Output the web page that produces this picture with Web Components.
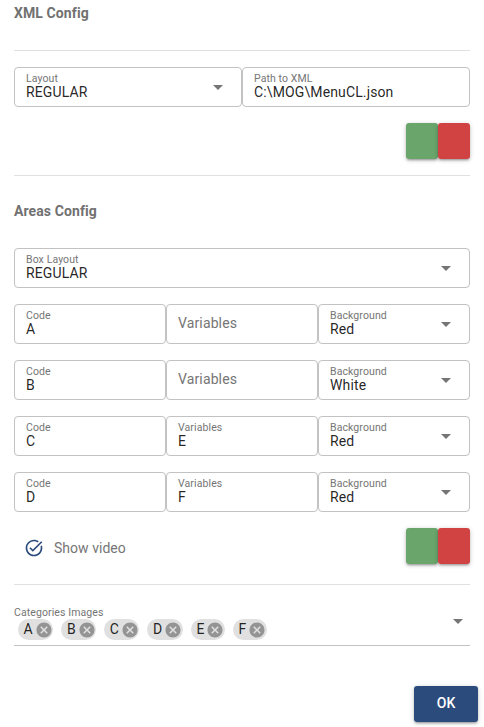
<!DOCTYPE html>
<html lang="en">
<head>
<meta charset="utf-8">
<title>Config</title>
<style>
html,body{margin:0;background:#fff}
body{font-family:Roboto,"Liberation Sans",sans-serif;font-size:14px;color:rgba(0,0,0,.87);overflow:hidden}
</style>
</head>
<body>
<config-page></config-page>
<script>
function define(name, html) {
  customElements.define(name, class extends HTMLElement {
    constructor() {
      super();
      const t = document.createElement('template');
      t.innerHTML = html;
      this.attachShadow({mode: 'open'}).append(t.content.cloneNode(true));
    }
  });
}

define('drop-arrow', `<style>:host{display:block;width:24px;height:24px;color:#757575}svg{display:block}</style>
<svg width="24" height="24" viewBox="0 0 24 24" fill="currentColor"><path d="M7 10l5 5 5-5z"/></svg>`);

define('section-title', `<style>:host{display:block;height:22px;line-height:22px;font-size:14px;font-weight:700;letter-spacing:.1px;color:#717171}</style><slot></slot>`);

define('rule-line', `<style>:host{display:block;height:1px;background:#e0e0e0}</style>`);

define('field-row', `<style>:host{display:flex;height:40px;margin-bottom:16px}::slotted(*){flex:1 1 0;min-width:0}</style><slot></slot>`);

customElements.define('outlined-field', class extends HTMLElement {
  connectedCallback() {
    const root = this.attachShadow({mode: 'open'});
    root.innerHTML = `<style>
:host{display:flex;align-items:center;box-sizing:border-box;height:40px;padding:0 11px;border:1px solid #c2c2c2;border-radius:4px}
.text{flex:1;min-width:0;letter-spacing:.13px;white-space:nowrap}
.label{font-size:10.5px;line-height:12px;letter-spacing:.1px;color:#757575}
.value{line-height:16px;margin-top:-1px;padding-bottom:1px}
.empty{line-height:20px;color:#757575;margin-top:-2px}
</style><div class="text"></div>`;
    const box = root.querySelector('.text');
    const add = (cls, s) => {
      const d = document.createElement('div');
      d.className = cls;
      d.textContent = s;
      box.append(d);
    };
    const value = this.getAttribute('value');
    if (value) {
      add('label', this.getAttribute('label'));
      add('value', value);
    } else add('empty', this.getAttribute('label'));
    if (this.hasAttribute('select')) root.append(document.createElement('drop-arrow'));
  }
});

define('action-button', `<style>:host{display:flex;align-items:center;justify-content:center;box-sizing:border-box;width:32px;height:36px;border-radius:3px;background:var(--fill);color:#fff;font-weight:500;box-shadow:0 1px 5px rgba(0,0,0,.2),0 2px 2px rgba(0,0,0,.14),0 3px 1px -2px rgba(0,0,0,.12)}
:host([wide]){width:64px;padding-bottom:2px}</style><slot></slot>`);

define('button-pair', `<style>:host{display:flex;height:36px}.g{--fill:#6aa56c}.r{--fill:#d14242}</style>
<action-button class="g"></action-button><action-button class="r"></action-button>`);

define('check-option', `<style>:host{display:flex;align-items:center;gap:10px;padding:4px 0 0 10px;color:#757575;letter-spacing:.03px}svg{display:block;color:#2c4b7d}</style>
<svg width="20" height="20" viewBox="0 0 24 24" fill="currentColor"><path d="M22 5.18L10.59 16.6l-4.24-4.24 1.41-1.41 2.83 2.83 10-10L22 5.18zm-2.21 5.04c.13.57.21 1.17.21 1.78 0 4.42-3.58 8-8 8s-8-3.58-8-8 3.58-8 8-8c1.58 0 3.04.46 4.28 1.25l1.44-1.44C16.1 2.67 14.13 2 12 2 6.48 2 2 6.48 2 12s4.48 10 10 10 10-4.48 10-10c0-1.19-.22-2.33-.6-3.39l-1.61 1.61z"/></svg><span><slot></slot></span>`);

define('category-chip', `<style>:host{display:flex;align-items:center;box-sizing:border-box;height:21px;padding:0 .5px 0 5.6px;border-radius:11px;background:#e0e0e0;line-height:21px;letter-spacing:.13px}
svg{display:block;margin-left:1.8px;color:#949494}</style>
<slot></slot><svg width="18" height="18" viewBox="0 0 24 24" fill="currentColor"><path d="M12 2C6.47 2 2 6.47 2 12s4.47 10 10 10 10-4.47 10-10S17.53 2 12 2zm5 13.59L15.59 17 12 13.41 8.41 17 7 15.59 10.59 12 7 8.41 8.41 7 12 10.59 15.59 7 17 8.41 13.41 12 17 15.59z"/></svg>`);

define('chip-select', `<style>:host{display:flex;align-items:center;box-sizing:border-box;height:41px;border-bottom:1px solid #c2c2c2}
.main{flex:1}.label{font-size:10.5px;line-height:12px;letter-spacing:.1px;color:#757575;padding-top:2px}.chips{display:flex;gap:8.15px;padding:0 4px 5px}drop-arrow{margin-top:-9px}</style>
<div class="main"><div class="label">Categories Images</div><div class="chips"><slot></slot></div></div><drop-arrow></drop-arrow>`);

define('config-page', `<style>
:host{display:block;width:484px;height:727px;box-sizing:border-box;padding:2px 14px 0}
.t1{margin-bottom:26px}
.row{display:flex;align-items:center;height:36px;margin-bottom:16px}
.end{justify-content:flex-end}
.split{justify-content:space-between;margin-bottom:20px}
.gap{margin-bottom:16px}
.t2{margin:24px 0 26px}
chip-select{margin-top:20px}
.foot{display:flex;justify-content:flex-end;margin:40px -8px 0 0;--fill:#2c4b7d}
</style>
<section-title class="t1">XML Config</section-title>
<rule-line class="gap"></rule-line>
<field-row><outlined-field label="Layout" value="REGULAR" select></outlined-field><outlined-field label="Path to XML" value="C:\\MOG\\MenuCL.json"></outlined-field></field-row>
<div class="row end"><button-pair></button-pair></div>
<rule-line></rule-line>
<section-title class="t2">Areas Config</section-title>
<field-row><outlined-field label="Box Layout" value="REGULAR" select></outlined-field></field-row>
<field-row><outlined-field label="Code" value="A"></outlined-field><outlined-field label="Variables"></outlined-field><outlined-field label="Background" value="Red" select></outlined-field></field-row>
<field-row><outlined-field label="Code" value="B"></outlined-field><outlined-field label="Variables"></outlined-field><outlined-field label="Background" value="White" select></outlined-field></field-row>
<field-row><outlined-field label="Code" value="C"></outlined-field><outlined-field label="Variables" value="E"></outlined-field><outlined-field label="Background" value="Red" select></outlined-field></field-row>
<field-row><outlined-field label="Code" value="D"></outlined-field><outlined-field label="Variables" value="F"></outlined-field><outlined-field label="Background" value="Red" select></outlined-field></field-row>
<div class="row split"><check-option>Show video</check-option><button-pair></button-pair></div>
<rule-line></rule-line>
<chip-select><category-chip>A</category-chip><category-chip>B</category-chip><category-chip>C</category-chip><category-chip>D</category-chip><category-chip>E</category-chip><category-chip>F</category-chip></chip-select>
<div class="foot"><action-button wide>OK</action-button></div>`);
</script>
</body>
</html>
